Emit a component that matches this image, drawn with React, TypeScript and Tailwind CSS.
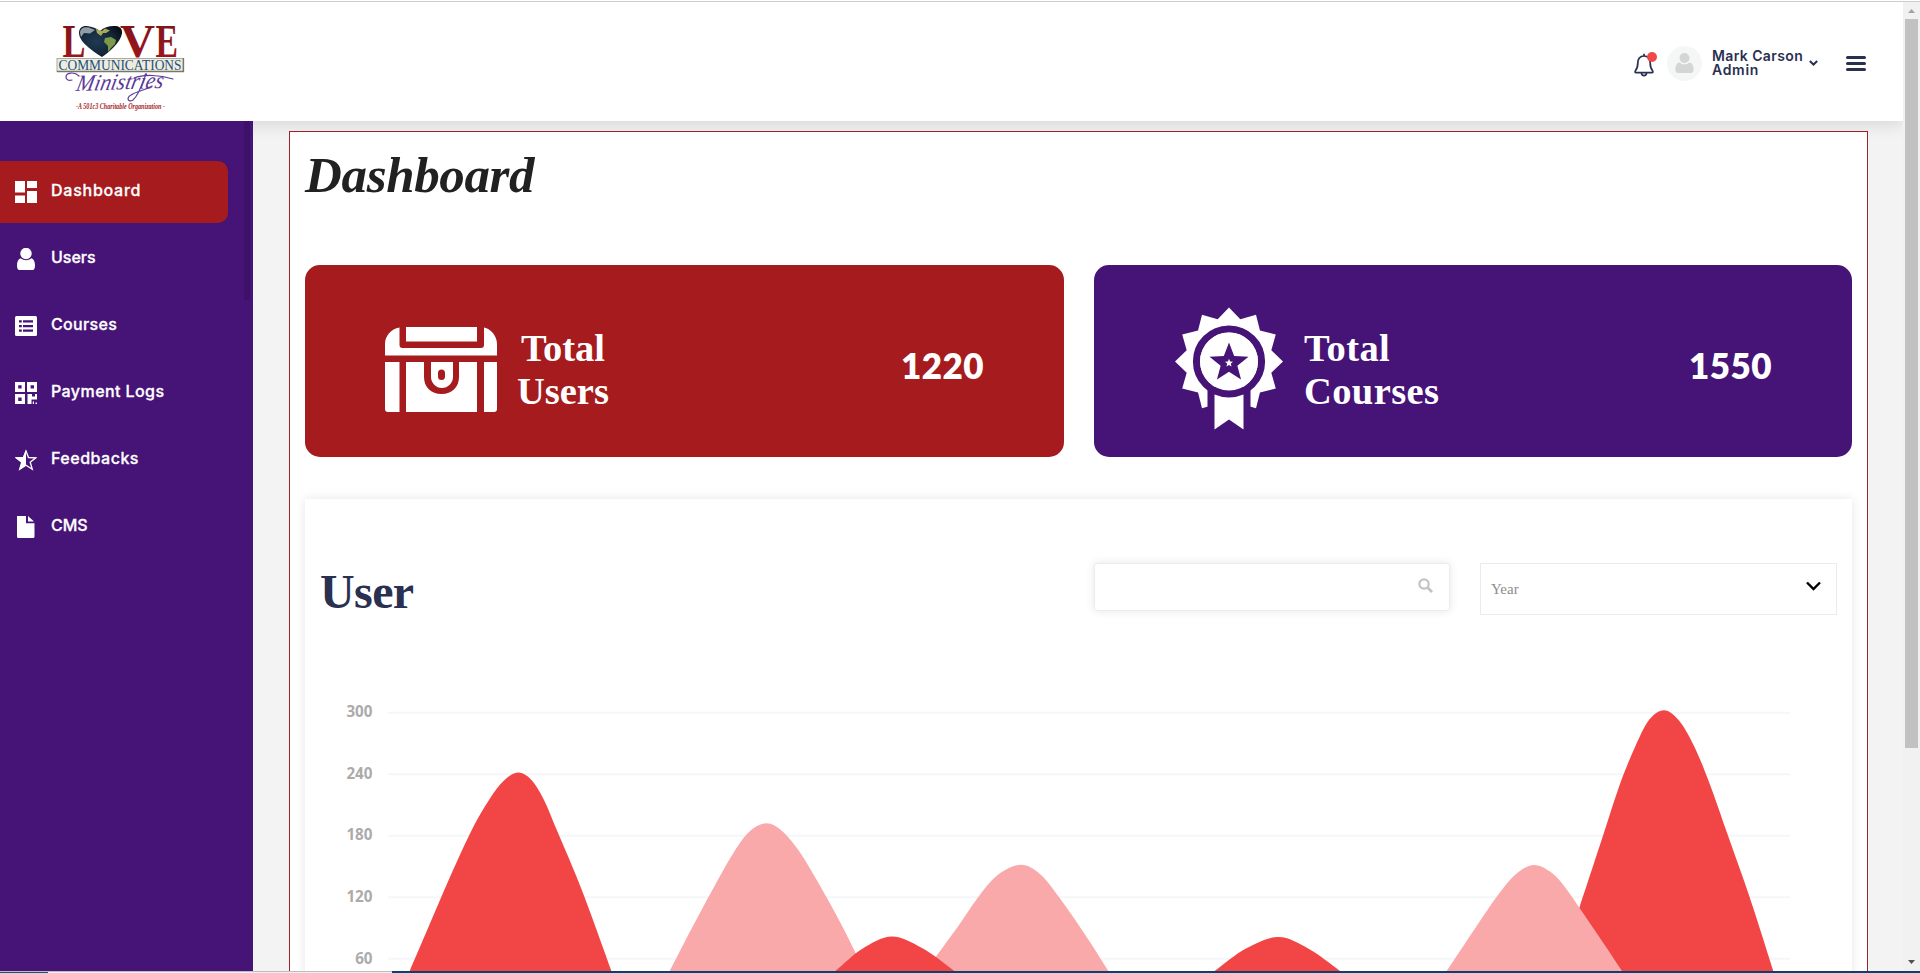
import type { ReactNode } from "react";

type Point = [number, number];

const smooth = (points: Point[]): string => {
  let d = `M${points[0][0]},${points[0][1]}`;
  for (let i = 0; i < points.length - 1; i++) {
    const p0 = points[Math.max(i - 1, 0)];
    const p1 = points[i];
    const p2 = points[i + 1];
    const p3 = points[Math.min(i + 2, points.length - 1)];
    d += `C${p1[0] + (p2[0] - p0[0]) / 6},${p1[1] + (p2[1] - p0[1]) / 6} ${p2[0] - (p3[0] - p1[0]) / 6},${p2[1] - (p3[1] - p1[1]) / 6} ${p2[0]},${p2[1]}`;
  }
  return d + "Z";
};

const RED = "#f24646";
const PINK = "#f9a9a9";

const hills: { color: string; points: Point[] }[] = [
  { color: RED, points: [[401.5, 990], [427, 930.5], [450, 877], [471.8, 830], [489, 800], [504, 780.5], [518, 772.5], [531, 779.5], [543.5, 799], [556.8, 830], [581.8, 890], [611.4, 971], [618, 990]] },
  { color: PINK, points: [[660, 990], [689, 933.5], [714, 887], [734, 852], [750, 831], [766.400, 823.300], [782, 831], [799, 851], [815.7, 878.3], [840, 922], [868, 978], [874, 990]] },
  { color: PINK, points: [[912, 990], [936.4, 956], [958, 926.5], [982, 892], [1001, 872.5], [1021.4, 864.7], [1040, 874], [1060, 898.5], [1084.7, 934], [1108.4, 971], [1120, 990]] },
  { color: RED, points: [[810, 990], [835.6, 970.7], [862, 949], [891.7, 936.5], [922, 948], [954, 970.7], [978, 990]] },
  { color: RED, points: [[1188, 990], [1215, 970.7], [1246, 948.500], [1278.5, 937], [1309, 949], [1339.7, 970.7], [1365, 990]] },
  { color: RED, points: [[1552, 990], [1564, 953], [1579.7, 906.7], [1603.8, 833.3], [1620, 784], [1635, 747], [1649, 720], [1664, 710.2], [1679, 720.5], [1694, 746], [1709, 782], [1727.8, 835], [1750, 898.3], [1773.3, 971], [1779, 990]] },
  { color: PINK, points: [[1434, 990], [1459, 952.5], [1479, 922.5], [1498, 895], [1516, 874], [1534, 865], [1552, 873.000], [1566, 888.5], [1583, 913], [1602, 941], [1622, 971], [1635, 990]] },
];

const starPath = (cx: number, cy: number, outer: number, inner: number, spikes: number): string => {
  const pts: string[] = [];
  for (let i = 0; i < spikes * 2; i++) {
    const r = i % 2 === 0 ? outer : inner;
    const a = (Math.PI * i) / spikes - Math.PI / 2;
    pts.push(`${(cx + r * Math.cos(a)).toFixed(2)},${(cy + r * Math.sin(a)).toFixed(2)}`);
  }
  return `M${pts.join("L")}Z`;
};

const Logo = () => (
  <svg width="136" height="90" viewBox="52 20 136 90" className="mt-[18px] ml-[52px] block overflow-visible">
    <defs>
      <radialGradient id="globe" cx="0.4" cy="0.5" r="0.7">
        <stop offset="0" stopColor="#1f3a52" />
        <stop offset="0.6" stopColor="#142638" />
        <stop offset="1" stopColor="#05090f" />
      </radialGradient>
      <linearGradient id="letters" x1="0" y1="0" x2="0" y2="1">
        <stop offset="0" stopColor="#7a1418" />
        <stop offset="1" stopColor="#a3161b" />
      </linearGradient>
    </defs>
    <g fontFamily="Liberation Serif, serif" fontWeight="700" fontSize="46" fill="url(#letters)">
      <text x="62.500" y="56.500" textLength="23" lengthAdjust="spacingAndGlyphs">L</text>
      <text x="120" y="56.500" textLength="35" lengthAdjust="spacingAndGlyphs">V</text>
      <text x="155.500" y="56.500" textLength="22.500" lengthAdjust="spacingAndGlyphs">E</text>
    </g>
    <path d="M102 57C96 53 79 43 79 33C79 28 82.500 25.500 87 26C92 26.500 97 28.500 100 31C104 27 110 25.500 116 26C120 26.500 122.500 29 122 33.500C120.500 43 108 53 102 57Z" fill="url(#globe)" />
    <path d="M80 33C80 28 84 26.500 89 27.500L95 30L90 33.500L84 33L81 37Z" fill="#b9c6cc" opacity="0.75" />
    <path d="M96 29L102 31L105 28.500L110 30.500L106 33L103 33L101 36L97 33Z" fill="#a9a95a" />
    <path d="M105 38L111 37L116 40L115 44L111 48L108 52L108 46L104 42Z" fill="#7d9a48" />
    <rect x="57" y="58.500" width="126" height="13" fill="#eeecdd" stroke="#a9aba0" strokeWidth="1" />
    <path d="M57 71.500H183.500V58" fill="none" stroke="#77776c" strokeWidth="1.300" />
    <text x="58.500" y="70" fontFamily="Liberation Serif, serif" fontSize="15" fill="#24507e" textLength="123" lengthAdjust="spacingAndGlyphs">COMMUNICATIONS</text>
    <text x="76" y="91" transform="rotate(-2 76 91) skewX(-14) translate(22 0)" fontFamily="Liberation Serif, serif" fontStyle="italic" fontSize="23" fill="#5d3a98" textLength="87" lengthAdjust="spacingAndGlyphs">Ministries</text>
    <g fill="none" stroke="#5d3a98" strokeWidth="1.200" strokeLinecap="round">
      <path d="M79 76C74 71 66 73 66 77C66 80 69 81 72 80" />
      <path d="M146 74C143 82 139 95 133 100C128 103 126 98 131 95C137 91 146 90 152 86" />
      <path d="M134 78C144 74 160 75 173 79" />
    </g>
    <text x="76" y="109" fontFamily="Liberation Serif, serif" fontStyle="italic" fontWeight="700" fontSize="7.500" fill="#a5262a" textLength="89" lengthAdjust="spacingAndGlyphs">-A 501c3 Charitable Organization -</text>
  </svg>
);

const DashboardIcon = () => (
  <svg width="22" height="22" viewBox="0 0 22 22" fill="#fff">
    <path d="M0 0H10V11.500H0ZM12 0H22V7H12ZM0 14.500H10V22H0ZM12 10H22V22H12Z" />
  </svg>
);

const UserIcon = () => (
  <svg width="22" height="22" viewBox="0 0 22 22" fill="#fff">
    <circle cx="11" cy="5.500" r="5.700" />
    <path d="M5.500 10.200Q11 14.500 16.500 10.200C19 11 20 14 20 17.500C20 20 19.300 22 17.500 22H4.500C2.700 22 2 20 2 17.500C2 14 3 11 5.500 10.200Z" />
  </svg>
);

const CoursesIcon = () => (
  <svg width="22" height="22" viewBox="0 0 22 22">
    <rect x="0" y="1" width="22" height="20" rx="1.500" fill="#fff" />
    <g fill="#461377">
      <path d="M4 5.300H6.800V7.500H4ZM8 5.300H18V7.500H8ZM4 10H6.800V12.200H4ZM8 10H18V12.200H8ZM4 14.500H6.800V16.700H4ZM8 14.500H18V16.700H8Z" />
    </g>
  </svg>
);

const PaymentIcon = () => (
  <svg width="22" height="22" viewBox="0 0 22 22" fill="#fff">
    <path
      fillRule="evenodd"
      d="M0 0H10V10H0ZM3.200 3.200V6.600H6.600V3.200ZM12 0H22V10H12ZM15.600 3.200V6.600H19V3.200ZM0 12H10V22H0ZM3.200 15.500V18.900H6.600V15.500ZM12.500 12H17V14.500H20V12H22V17.500H16.500V22H12.500Z"
    />
    <path d="M17.800 19.500H19V22H17.800ZM20.500 20.500H22V22H20.500Z" />
  </svg>
);

const StarIcon = () => (
  <svg width="22" height="22" viewBox="0 0 22 22">
    <path d="M11 2L13.500 8.500L20.800 8.800L15.200 13.300L17.300 20.200L11 16.200L4.700 20.200L6.800 13.300L1 8.800L8.500 8.500Z" fill="none" stroke="#fff" strokeWidth="1.300" />
    <path d="M11 1V16.400L4.200 20.900L6.500 13.400L0 8.300L8 8Z" fill="#fff" />
  </svg>
);

const FileIcon = () => (
  <svg width="22" height="22" viewBox="0 0 22 22" fill="#fff">
    <path d="M2 0H11V7.300H19.500V20.500Q19.500 22 18 22H3.500Q2 22 2 20.500Z" />
    <path d="M13 0L19 5.500H13Z" />
  </svg>
);

const NavItem = ({ icon, active, children }: { icon: ReactNode; active?: boolean; children: ReactNode }) => (
  <li
    className={
      active
        ? "flex h-[62px] w-[228px] items-center gap-[14px] rounded-r-[10px] bg-[#a51b1e] pl-[15px]"
        : "flex h-[62px] w-[228px] items-center gap-[14px] pl-[15px]"
    }
  >
    {icon}
    <span className="-mt-[5px] text-[16px] font-medium text-white [-webkit-text-stroke:0.300px_#fff]">{children}</span>
  </li>
);

const ChestIcon = () => (
  <svg width="112" height="85" viewBox="0 0 112 85" fill="#fff">
    <path d="M14.500 0.500V18Q14.500 21 17.500 21H96Q99 21 99 18V0.500C106 2 112 9 112 17V28.500H0V17C0 9 6 2 14.500 0.500Z" />
    <path d="M21 0H92V14.500H21Z" />
    <path d="M0 35H14.500V85H3Q0 85 0 82ZM99 35H112V82Q112 85 109 85H99Z" />
    <path d="M21 35H39V50C39 60 46 67 56.500 67C67 67 74 60 74 50V35H92V85H21Z" />
    <path fillRule="evenodd" d="M46 35H68V50C68 56 63 61 57 61C51 61 46 56 46 50ZM56.500 42.500Q53 42.500 53 46V49.500Q53 53 56.500 53Q60 53 60 49.500V46Q60 42.500 56.500 42.500Z" />
  </svg>
);

const MedalIcon = () => (
  <svg width="110" height="124" viewBox="0 0 110 124">
    <path d={starPath(55, 54.500, 54, 43.800, 12)} fill="#fff" />
    <rect x="33.500" y="80" width="43" height="44" fill="#461377" />
    <circle cx="55" cy="54.500" r="32.500" fill="none" stroke="#461377" strokeWidth="7.200" />
    <circle cx="55" cy="54.500" r="29" fill="#fff" />
    <path d={starPath(55, 56, 20.500, 8.800, 5)} fill="#461377" />
    <path d={starPath(55, 56, 4.300, 1.900, 5)} fill="#fff" />
    <path d="M40.500 87.500Q55 93.500 69.500 87.500V122.500L55 112.500L40.500 122.500Z" fill="#fff" />
  </svg>
);

const Gridlines = () => (
  <>
    {[300, 240, 180, 120, 60].map((value, i) => (
      <g key={value}>
        <path d={`M388 ${712.700 + i * 61.500}H1790`} stroke="#f4f6f7" strokeWidth="2" />
        <text x="372.500" y={717.200 + i * 61.600} textAnchor="end" fontFamily="Open Sans, sans-serif" fontWeight="700" fontSize="15.200" fill="#ababab">
          {value}
        </text>
      </g>
    ))}
  </>
);

export default function App() {
  return (
    <div className="flex h-[973px] w-[1920px] flex-col overflow-hidden bg-white font-[Inter,sans-serif]">
      <div className="h-[2px] shrink-0 border-b border-[#cbcccc]" />
      <div className="flex h-[969px] shrink-0">
        <div className="flex w-[1903px] flex-col overflow-hidden">
          <header className="relative z-10 flex h-[119px] shrink-0 justify-between bg-white shadow-[0_5px_15px_rgba(0,0,0,0.1)]">
            <Logo />
            <div className="flex h-[122px] items-center">
              <div className="relative mt-[4px]">
                <svg width="20" height="24" viewBox="0 0 20 24" fill="none" stroke="#2a3050" strokeWidth="1.700">
                  <path d="M10 3C5.800 3 3.800 6 3.800 10C3.800 14.500 3 16 1.300 18Q0.600 19.500 2 19.600H18Q19.400 19.500 18.700 18C17 16 16.200 14.500 16.200 10C16.200 6 14.200 3 10 3Z" />
                  <path d="M10 3V0.800M7.500 20C7.500 23.500 12.500 23.500 12.500 20" />
                </svg>
                <span className="absolute -top-[1px] left-[13px] size-[10px] rounded-full bg-[#f34848]" />
              </div>
              <div className="ml-[13px] flex size-[35px] items-center justify-center rounded-full bg-[#f5f6f6]">
                <svg width="19" height="21" viewBox="0 0 19 21" fill="#d5d5d5">
                  <circle cx="9.500" cy="5" r="5" />
                  <path d="M4.500 9.500Q9.500 13.500 14.500 9.500C18 10.500 19 13.500 18.500 18Q18 20 16 20H3Q1 20 0.500 18C0 13.500 1 10.500 4.500 9.500Z" />
                </svg>
              </div>
              <div className="ml-[10px] w-[92px] text-[14px] leading-[14px] font-semibold text-[#2a3050]">
                <p className="tracking-[0.380px] whitespace-nowrap">Mark Carson</p>
                <p className="tracking-[0.700px]">Admin</p>
              </div>
              <svg width="9" height="6" viewBox="0 0 9 6" className="ml-[5px]" fill="none" stroke="#2a3050" strokeWidth="2">
                <path d="M0.800 1L4.500 4.500L8.200 1" />
              </svg>
              <div className="mt-[1px] mr-[37px] ml-[28px] flex flex-col gap-[3.500px]">
                <span className="h-[2.500px] w-[20px] rounded-full bg-[#2a3050]" />
                <span className="h-[2.500px] w-[20px] rounded-full bg-[#2a3050]" />
                <span className="h-[2.500px] w-[20px] rounded-full bg-[#2a3050]" />
              </div>
            </div>
          </header>

          <div className="flex h-[850px]">
            <aside className="relative z-10 flex w-[253px] shrink-0 justify-between bg-[#461377] pr-[3px]">
              <ul className="flex flex-col gap-[5px] pt-[40px]">
                <NavItem icon={<DashboardIcon />} active>
                  <span className="tracking-[0.750px]">Dashboard</span>
                </NavItem>
                <NavItem icon={<UserIcon />}>Users</NavItem>
                <NavItem icon={<CoursesIcon />}>
                  <span className="tracking-[0.350px]">Courses</span>
                </NavItem>
                <NavItem icon={<PaymentIcon />}>
                  <span className="tracking-[0.420px]">Payment Logs</span>
                </NavItem>
                <NavItem icon={<StarIcon />}>
                  <span className="tracking-[0.500px]">Feedbacks</span>
                </NavItem>
                <NavItem icon={<FileIcon />}>CMS</NavItem>
              </ul>
              <div className="h-[179px] w-[6px] rounded-b-[3px] bg-[#3d1169]" />
            </aside>

            <main className="flex-1 overflow-hidden bg-[#f3f3f3] pt-[10px] pr-[35px] pl-[36px]">
              <section className="h-[1200px] border border-[#a0232b] bg-white px-[15px]">
                <h1 className="h-[133px] pt-[14px] font-['Liberation_Serif',serif] text-[51px] leading-[58px] font-bold tracking-[-0.350px] text-[#212121] italic">Dashboard</h1>
                <div className="grid grid-cols-[759px_758px] gap-[30px]">
                  <div className="flex h-[192px] items-center rounded-[15px] bg-[#a51b1e] pr-[80px] pl-[80px] text-white">
                    <div className="mt-[17px]"><ChestIcon /></div>
                    <p className="mt-[17px] ml-[20px] text-center font-['Liberation_Serif',serif] text-[38.500px] leading-[43px] font-bold">Total<br />Users</p>
                    <p className="mt-[9px] ml-auto font-[Lato,sans-serif] text-[35px] font-extrabold tracking-[0.450px]">1220</p>
                  </div>
                  <div className="flex h-[192px] items-center rounded-[15px] bg-[#461377] pr-[80px] pl-[80px] text-white">
                    <div className="mt-[15px]"><MedalIcon /></div>
                    <p className="mt-[17px] ml-[20px] font-['Liberation_Serif',serif] text-[38.500px] leading-[43px] font-bold tracking-[0.400px]">Total<br />Courses</p>
                    <p className="mt-[9px] ml-auto font-[Lato,sans-serif] text-[35px] font-extrabold tracking-[0.450px]">1550</p>
                  </div>
                </div>

                <div className="mt-[42px] h-[620px] bg-white shadow-[0_0_10px_rgba(0,0,0,0.1)]">
                  <div className="flex h-[150px] items-start pt-[64px] pl-[15px]">
                    <h2 className="w-[774px] pt-[2px] font-['Liberation_Serif',serif] text-[48px] leading-[54px] font-bold tracking-[-0.600px] text-[#2a3050]">User</h2>
                    <div className="flex h-[48px] w-[356px] items-center justify-end rounded-[3px] border border-[#ececec] pr-[16px] shadow-[0_0_10px_rgba(0,0,0,0.1)]">
                      <svg width="15" height="15" viewBox="0 0 15 15" className="-mt-[3px]" fill="none" stroke="#c4c4c4" strokeWidth="2.200">
                        <circle cx="6" cy="6" r="4.700" />
                        <path d="M9.500 9.500L14 14" strokeWidth="2.800" />
                      </svg>
                    </div>
                    <div className="ml-[30px] flex h-[52px] w-[357px] items-center justify-between border border-[#ebebeb] pr-[15px] pl-[10px]">
                      <span className="font-['Liberation_Serif',serif] text-[15px] text-[#8d8d8d]">Year</span>
                      <svg width="15" height="10" viewBox="0 0 15 10" className="-mt-[6px]" fill="none" stroke="#000" strokeWidth="2.400">
                        <path d="M1 1.500L7.500 8L14 1.500" />
                      </svg>
                    </div>
                  </div>
                  <svg width="1547" height="322" viewBox="305 649 1547 322" className="block">
                    <Gridlines />
                    {hills.map((hill, i) => (
                      <path key={i} d={smooth(hill.points)} fill={hill.color} />
                    ))}
                  </svg>
                </div>
              </section>
            </main>
          </div>
        </div>

        <div className="flex w-[17px] flex-col items-center justify-between bg-[#f1f1f1]">
          <svg width="17" height="17" viewBox="0 0 17 17" fill="#a3a3a3">
            <path d="M5 11L8.500 7L12 11Z" />
          </svg>
          <div className="mb-[206px] h-[729px] w-[13px] bg-[#c1c1c1]" />
          <svg width="17" height="17" viewBox="0 0 17 17" fill="#505050">
            <path d="M5 6L8.500 10L12 6Z" />
          </svg>
        </div>
      </div>
      <div className="flex h-[2px] shrink-0">
        <div className="w-[48px] border-t border-[#bdbdbd] bg-[#0b5a78]" />
        <div className="w-[344px] border-t border-[#bdbdbd] bg-[#f0f0f0]" />
        <div className="flex-1 bg-[#0b4170]" />
      </div>
    </div>
  );
}
